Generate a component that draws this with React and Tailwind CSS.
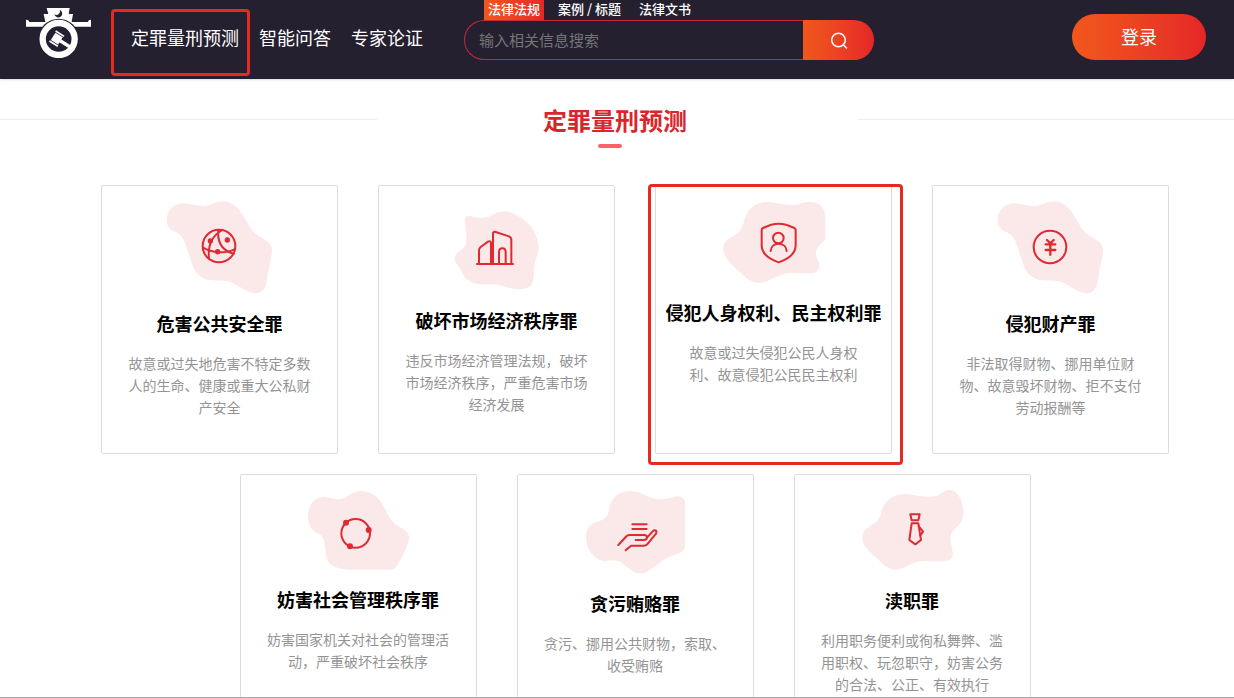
import React from "react";

const BLOB_DRIFT =
  "M215 118C216 88 240 69 268 70C300 74 320 83 345 74C375 61 402 60 425 82C455 112 460 150 490 168C515 180 533 192 531 215C528 240 520 265 517 295C514 325 500 342 480 340C450 336 425 312 400 304C370 297 345 308 320 292C290 272 288 235 272 195C262 165 250 160 235 154C220 146 214 132 215 118Z";

const crimes = [
  {
    title: "危害公共安全罪",
    text: "故意或过失地危害不特定多数人的生命、健康或重大公私财产安全",
    viewBox: "207 63 333 285",
    height: "h-[95px]",
    blob: BLOB_DRIFT,
    icon: (
      <>
        <circle cx="372" cy="198" r="49" />
        <path d="M324 203C350 219 395 222 420 207M382 150C350 168 338 200 342 236M370 150C366 190 382 212 416 221" />
        <g fill="#dd2a33" stroke="none">
          <circle cx="346" cy="183" r="8" />
          <circle cx="397" cy="180" r="8" />
          <circle cx="368" cy="215" r="8" />
        </g>
      </>
    ),
  },
  {
    title: "破坏市场经济秩序罪",
    text: "违反市场经济管理法规，破坏市场经济秩序，严重危害市场经济发展",
    viewBox: "213 63 333 276",
    height: "h-[92px]",
    blob: "M285 115C287 105 300 106 312 111C335 118 355 112 372 103C395 91 415 91 432 102C470 118 500 150 505 195C508 222 494 240 492 268C491 300 490 312 478 321C455 332 425 328 400 318C375 308 345 318 318 311C292 304 280 290 274 272C266 256 252 248 254 232C258 214 280 212 286 196C294 172 285 145 285 115Z",
    icon: (
      <>
        <path d="M321 252H429" />
        <path d="M327 251V211Q327 205 332 201L354 185Q363 181 363 190V251M369 251V162Q369 154 377 156L417 169Q424 172 424 179V251" />
        <path d="M387 251V216Q387 205 397 205Q407 205 407 216V251" />
      </>
    ),
  },
  {
    title: "侵犯人身权利、民主权利罪",
    text: "故意或过失侵犯公民人身权利、故意侵犯公民民主权利",
    viewBox: "234 63 333 252",
    height: "h-[84px]",
    highlighted: true,
    blob: "M250 208C248 190 262 178 280 168C302 158 305 145 310 130C318 95 340 66 380 66C410 66 440 80 475 73C500 64 520 62 536 72C555 84 556 100 556 125V178C548 190 530 200 528 216C526 234 538 244 538 258C537 276 525 280 508 280C480 280 450 276 425 284C395 294 375 312 350 308C325 302 315 290 298 275C278 256 250 232 250 208Z",
    icon: (
      <>
        <path d="M416 131C397 131 381 138 369 144Q365 146 365 151V196C365 222 390 238 416 247C442 238 467 222 467 196V151Q467 146 463 144C451 138 435 131 416 131Z" />
        <circle cx="415" cy="174" r="16" />
        <path d="M392 213C394 184 438 184 440 213" />
      </>
    ),
  },
  {
    title: "侵犯财产罪",
    text: "非法取得财物、挪用单位财物、故意毁坏财物、拒不支付劳动报酬等",
    viewBox: "207 63 333 285",
    height: "h-[95px]",
    blob: BLOB_DRIFT,
    icon: (
      <>
        <circle cx="372" cy="201" r="49" />
        <path
          d="M363 180L373 190L383 180M359 193H388M359 210H388M373 190V224"
          strokeWidth="7"
        />
      </>
    ),
  },
  {
    title: "妨害社会管理秩序罪",
    text: "妨害国家机关对社会的管理活动，严重破坏社会秩序",
    viewBox: "204 60 333 246",
    height: "h-[82px]",
    blob: "M219 138C218 105 240 80 268 81C290 84 310 92 328 84C345 72 358 63 380 63C415 64 437 88 452 120C462 145 475 160 492 170C512 180 525 190 522 208C515 235 500 265 484 290C478 298 470 299 458 299H350C320 298 290 292 280 275C268 252 272 225 266 208C258 188 240 192 229 175C221 163 219 150 219 138Z",
    icon: (
      <>
        <circle cx="362" cy="190" r="43" />
        <g fill="#dd2a33" stroke="none">
          <circle cx="333" cy="158" r="9" />
          <circle cx="401" cy="180" r="9" />
          <circle cx="345" cy="229" r="9" />
        </g>
      </>
    ),
  },
  {
    title: "贪污贿赂罪",
    text: "贪污、挪用公共财物，索取、收受贿赂",
    viewBox: "210 60 333 258",
    height: "h-[86px]",
    blob: "M228 200C228 172 245 160 268 153C292 145 296 130 298 112C304 80 330 63 362 63C395 64 415 86 450 88C475 88 490 78 508 80C520 82 525 88 525 100V228C524 245 510 250 485 258C450 270 428 302 398 310C370 312 358 296 340 282C318 264 305 274 280 273C250 268 228 235 228 200Z",
    icon: (
      <>
        <path d="M367 163H410M367 177H410" />
        <path d="M325 225L350 198Q354 195 360 195H404Q411 196 411 203Q410 210 402 210H377M411 203L428 184Q434 178 439 183Q440 186 438 191L414 220Q409 227 402 227H363L347 241" />
      </>
    ),
  },
  {
    title: "渎职罪",
    text: "利用职务便利或徇私舞弊、滥用职权、玩忽职守，妨害公务的合法、公正、有效执行",
    viewBox: "216 60 333 249",
    height: "h-[83px]",
    blob: "M231 202C232 180 252 170 270 158C290 146 284 128 296 108C312 78 345 68 375 73C405 80 440 84 460 76C475 66 480 59 496 60C520 62 535 95 535 128C535 155 520 168 506 180C492 195 497 215 502 238C505 258 502 270 485 272C455 275 420 270 395 276C368 286 350 300 325 299C305 296 290 278 275 264C255 246 231 226 231 202Z",
    icon: (
      <>
        <path d="M376 133H404L400 151H380Z" />
        <path d="M380 160H400L408 210L391 223L373 210Z" />
        <path d="M401 168L414 185L406 196" />
      </>
    ),
  },
];

const searchTabs = ["法律法规", "案例 / 标题", "法律文书"];

function Logo() {
  return (
    <svg
      viewBox="78 24 195 150"
      className="mt-2 h-[50px] w-[65px] shrink-0"
      aria-hidden="true"
    >
      <path
        fill="#fff"
        d="M140 24H209L206 42H219L215 66H264L266 61L273 59V80H78V59L85 61L88 66H136L131 42H145Z"
      />
      <path fill="#242030" d="M179 29A12 12 0 1 1 163 43A11 11 0 0 0 179 29Z" />
      <circle cx="176" cy="117" r="61" fill="#242030" />
      <circle cx="176" cy="117" r="48" fill="none" stroke="#fff" strokeWidth="19" />
      <g fill="#fff" transform="rotate(32 172 117)">
        <rect x="157" y="104" width="26" height="26" />
        <rect x="155" y="97" width="30" height="5" />
        <rect x="155" y="132" width="30" height="5" />
        <rect x="182" y="112" width="38" height="10" />
      </g>
    </svg>
  );
}

function Header() {
  return (
    <header className="relative flex h-[79px] items-start bg-[#242030] pr-7 pl-[26px] text-white shadow">
      <Logo />

      <nav className="ml-10 flex h-[74px] shrink-0 items-stretch gap-5 text-lg">
        <a href="#predict" className="relative flex items-center">
          定罪量刑预测
          <span className="absolute top-[9px] -right-[11px] -bottom-0.5 -left-5 rounded-sm border-3 border-[#e62a20]"></span>
        </a>
        <a href="#qa" className="flex items-center">
          智能问答
        </a>
        <a href="#expert" className="flex items-center">
          专家论证
        </a>
      </nav>

      <div className="ml-[41px] w-[410px]">
        <div className="flex h-5 gap-2.5 pl-5 text-[13px] leading-[18px] font-medium">
          {searchTabs.map((tab, i) => (
            <button
              key={tab}
              type="button"
              className={
                i === 0
                  ? "bg-linear-to-r from-[#f1571c] to-[#e52627] px-1 pb-0.5"
                  : "px-1 pb-0.5"
              }
            >
              {tab}
            </button>
          ))}
        </div>
        <form className="flex h-10">
          <input
            type="text"
            aria-label="搜索"
            placeholder="输入相关信息搜索"
            className="min-w-0 flex-1 rounded-l-full border border-r-0 border-[#c5283a] bg-transparent pl-3.5 text-[15px] outline-none placeholder:text-[#757575]"
          />
          <button
            type="button"
            aria-label="提交"
            className="flex w-[71px] items-center justify-center rounded-r-full bg-linear-to-r from-[#f1571c] to-[#e52627]"
          >
            <svg
              viewBox="0 0 18 18"
              className="size-[18px]"
              fill="none"
              stroke="#fff"
              strokeWidth="1.5"
              strokeLinecap="round"
            >
              <circle cx="8.5" cy="9" r="6.8" />
              <path d="M13.5 14L16.5 17" />
            </svg>
          </button>
        </form>
      </div>

      <button
        type="button"
        className="mt-3.5 ml-auto h-[46px] w-[134px] shrink-0 rounded-full bg-linear-to-r from-[#f1571c] to-[#e52627] pb-0.5 text-lg"
      >
        登录
      </button>
    </header>
  );
}

function CrimeCard({ crime }) {
  return (
    <article className="relative flex h-[269px] w-[237px] flex-col items-center rounded-xs border border-[#dcdcdc] pt-[15px] text-center">
      <svg
        viewBox={crime.viewBox}
        className={`w-[111px] shrink-0 ${crime.height}`}
        fill="none"
        stroke="#dd2a33"
        strokeWidth="6"
        strokeLinecap="round"
        strokeLinejoin="round"
        aria-hidden="true"
      >
        <path d={crime.blob} fill="#fbe9ea" stroke="none" />
        {crime.icon}
      </svg>
      <h3 className="mt-[15px] text-lg leading-6 font-bold whitespace-nowrap text-black">
        {crime.title}
      </h3>
      <p className="mt-[17px] px-[26px] text-sm leading-[22px] text-[#949494]">
        {crime.text}
      </p>
      {crime.highlighted && (
        <span className="absolute -top-0.5 -right-3 -bottom-3 -left-2 rounded-sm border-3 border-[#e62a20]"></span>
      )}
    </article>
  );
}

function App() {
  return (
    <div
      lang="zh-CN"
      className="h-screen overflow-x-hidden overflow-y-auto border-b border-[#a8a8a8] bg-white font-['Noto_Sans_CJK_SC',sans-serif] [scrollbar-width:none]"
    >
      <Header />

      <main id="predict">
        <div className="flex items-start pt-[23px]">
          <span className="mt-[17px] h-px flex-1 bg-[#ededed]"></span>
          <div className="flex w-[480px] flex-col items-center pr-1">
            <h2 className="text-2xl leading-9 font-bold text-[#d9262c]">
              定罪量刑预测
            </h2>
            <span className="mt-1.5 mr-2.5 h-1 w-6 rounded-full bg-[#ff6168]"></span>
          </div>
          <span className="mt-[17px] h-px flex-1 bg-[#ededed]"></span>
        </div>

        <div className="mt-[37px] flex flex-wrap justify-center gap-x-10 gap-y-5 pb-10 pl-9">
          {crimes.map((crime) => (
            <CrimeCard key={crime.title} crime={crime} />
          ))}
        </div>
      </main>
    </div>
  );
}

export default App;
